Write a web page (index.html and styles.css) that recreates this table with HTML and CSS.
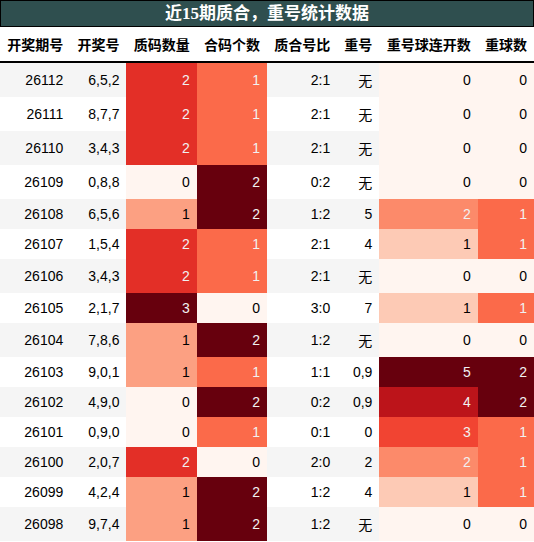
FILE: index.html
```html
<!DOCTYPE html>
<html lang="zh">
<head>
<meta charset="utf-8">
<title>近15期质合，重号统计数据</title>
<link rel="stylesheet" href="styles.css">
</head>
<body>
<div class="title">近15期质合，重号统计数据</div>
<table class="stats">
  <thead>
    <tr><th>开奖期号</th><th>开奖号</th><th>质码数量</th><th>合码个数</th><th>质合号比</th><th>重号</th><th>重号球连开数</th><th>重球数</th></tr>
  </thead>
  <tbody>
    <tr><td>26112</td><td>6,5,2</td><td class="c67">2</td><td class="c50">1</td><td>2:1</td><td>无</td><td class="c0">0</td><td class="c0">0</td></tr>
    <tr><td>26111</td><td>8,7,7</td><td class="c67">2</td><td class="c50">1</td><td>2:1</td><td>无</td><td class="c0">0</td><td class="c0">0</td></tr>
    <tr><td>26110</td><td>3,4,3</td><td class="c67">2</td><td class="c50">1</td><td>2:1</td><td>无</td><td class="c0">0</td><td class="c0">0</td></tr>
    <tr><td>26109</td><td>0,8,8</td><td class="c0">0</td><td class="c100">2</td><td>0:2</td><td>无</td><td class="c0">0</td><td class="c0">0</td></tr>
    <tr><td>26108</td><td>6,5,6</td><td class="c33">1</td><td class="c100">2</td><td>1:2</td><td>5</td><td class="c40">2</td><td class="c50">1</td></tr>
    <tr><td>26107</td><td>1,5,4</td><td class="c67">2</td><td class="c50">1</td><td>2:1</td><td>4</td><td class="c20">1</td><td class="c50">1</td></tr>
    <tr><td>26106</td><td>3,4,3</td><td class="c67">2</td><td class="c50">1</td><td>2:1</td><td>无</td><td class="c0">0</td><td class="c0">0</td></tr>
    <tr><td>26105</td><td>2,1,7</td><td class="c100">3</td><td class="c0">0</td><td>3:0</td><td>7</td><td class="c20">1</td><td class="c50">1</td></tr>
    <tr><td>26104</td><td>7,8,6</td><td class="c33">1</td><td class="c100">2</td><td>1:2</td><td>无</td><td class="c0">0</td><td class="c0">0</td></tr>
    <tr><td>26103</td><td>9,0,1</td><td class="c33">1</td><td class="c50">1</td><td>1:1</td><td>0,9</td><td class="c100">5</td><td class="c100">2</td></tr>
    <tr><td>26102</td><td>4,9,0</td><td class="c0">0</td><td class="c100">2</td><td>0:2</td><td>0,9</td><td class="c80">4</td><td class="c100">2</td></tr>
    <tr><td>26101</td><td>0,9,0</td><td class="c0">0</td><td class="c50">1</td><td>0:1</td><td>0</td><td class="c60">3</td><td class="c50">1</td></tr>
    <tr><td>26100</td><td>2,0,7</td><td class="c67">2</td><td class="c0">0</td><td>2:0</td><td>2</td><td class="c40">2</td><td class="c50">1</td></tr>
    <tr><td>26099</td><td>4,2,4</td><td class="c33">1</td><td class="c100">2</td><td>1:2</td><td>4</td><td class="c20">1</td><td class="c50">1</td></tr>
    <tr><td>26098</td><td>9,7,4</td><td class="c33">1</td><td class="c100">2</td><td>1:2</td><td>无</td><td class="c0">0</td><td class="c0">0</td></tr>
  </tbody>
</table>
</body>
</html>
```
FILE: styles.css
```css
html, body {
  margin: 0;
  padding: 0;
  background: #ffffff;
}

.title {
  box-sizing: border-box;
  width: 534px;
  border: 1px solid #000000;
  background: #2f4f4f;
  color: #ffffff;
  font-family: "Liberation Serif", "Noto Sans CJK SC", serif;
  font-weight: bold;
  font-size: 17px;
  line-height: 25px;
  text-align: center;
}

.stats {
  width: 534px;
  border-collapse: collapse;
  border-spacing: 0;
  font-family: "Liberation Sans", "Noto Sans CJK SC", sans-serif;
  font-size: 14px;
  color: #000000;
}

.stats th,
.stats td {
  padding: 7px;
  text-align: right;
  white-space: nowrap;
  vertical-align: middle;
}

.stats th {
  font-weight: bold;
  background: #ffffff;
}

.stats thead tr {
  border-bottom: 2px solid #000000;
}

.stats tbody tr:nth-child(odd) {
  background: #f5f5f5;
}

.stats tbody tr:nth-child(even) {
  background: #ffffff;
}

.c0 { background: #fff5f0; color: #000000; }
.c20 { background: #fdcab5; color: #000000; }
.c33 { background: #fca082; color: #000000; }
.c40 { background: #fc8a6a; color: #f1f1f1; }
.c50 { background: #fb6a4a; color: #f1f1f1; }
.c60 { background: #f14432; color: #f1f1f1; }
.c67 { background: #e32f27; color: #f1f1f1; }
.c80 { background: #bc141a; color: #f1f1f1; }
.c100 { background: #67000d; color: #f1f1f1; }
```
